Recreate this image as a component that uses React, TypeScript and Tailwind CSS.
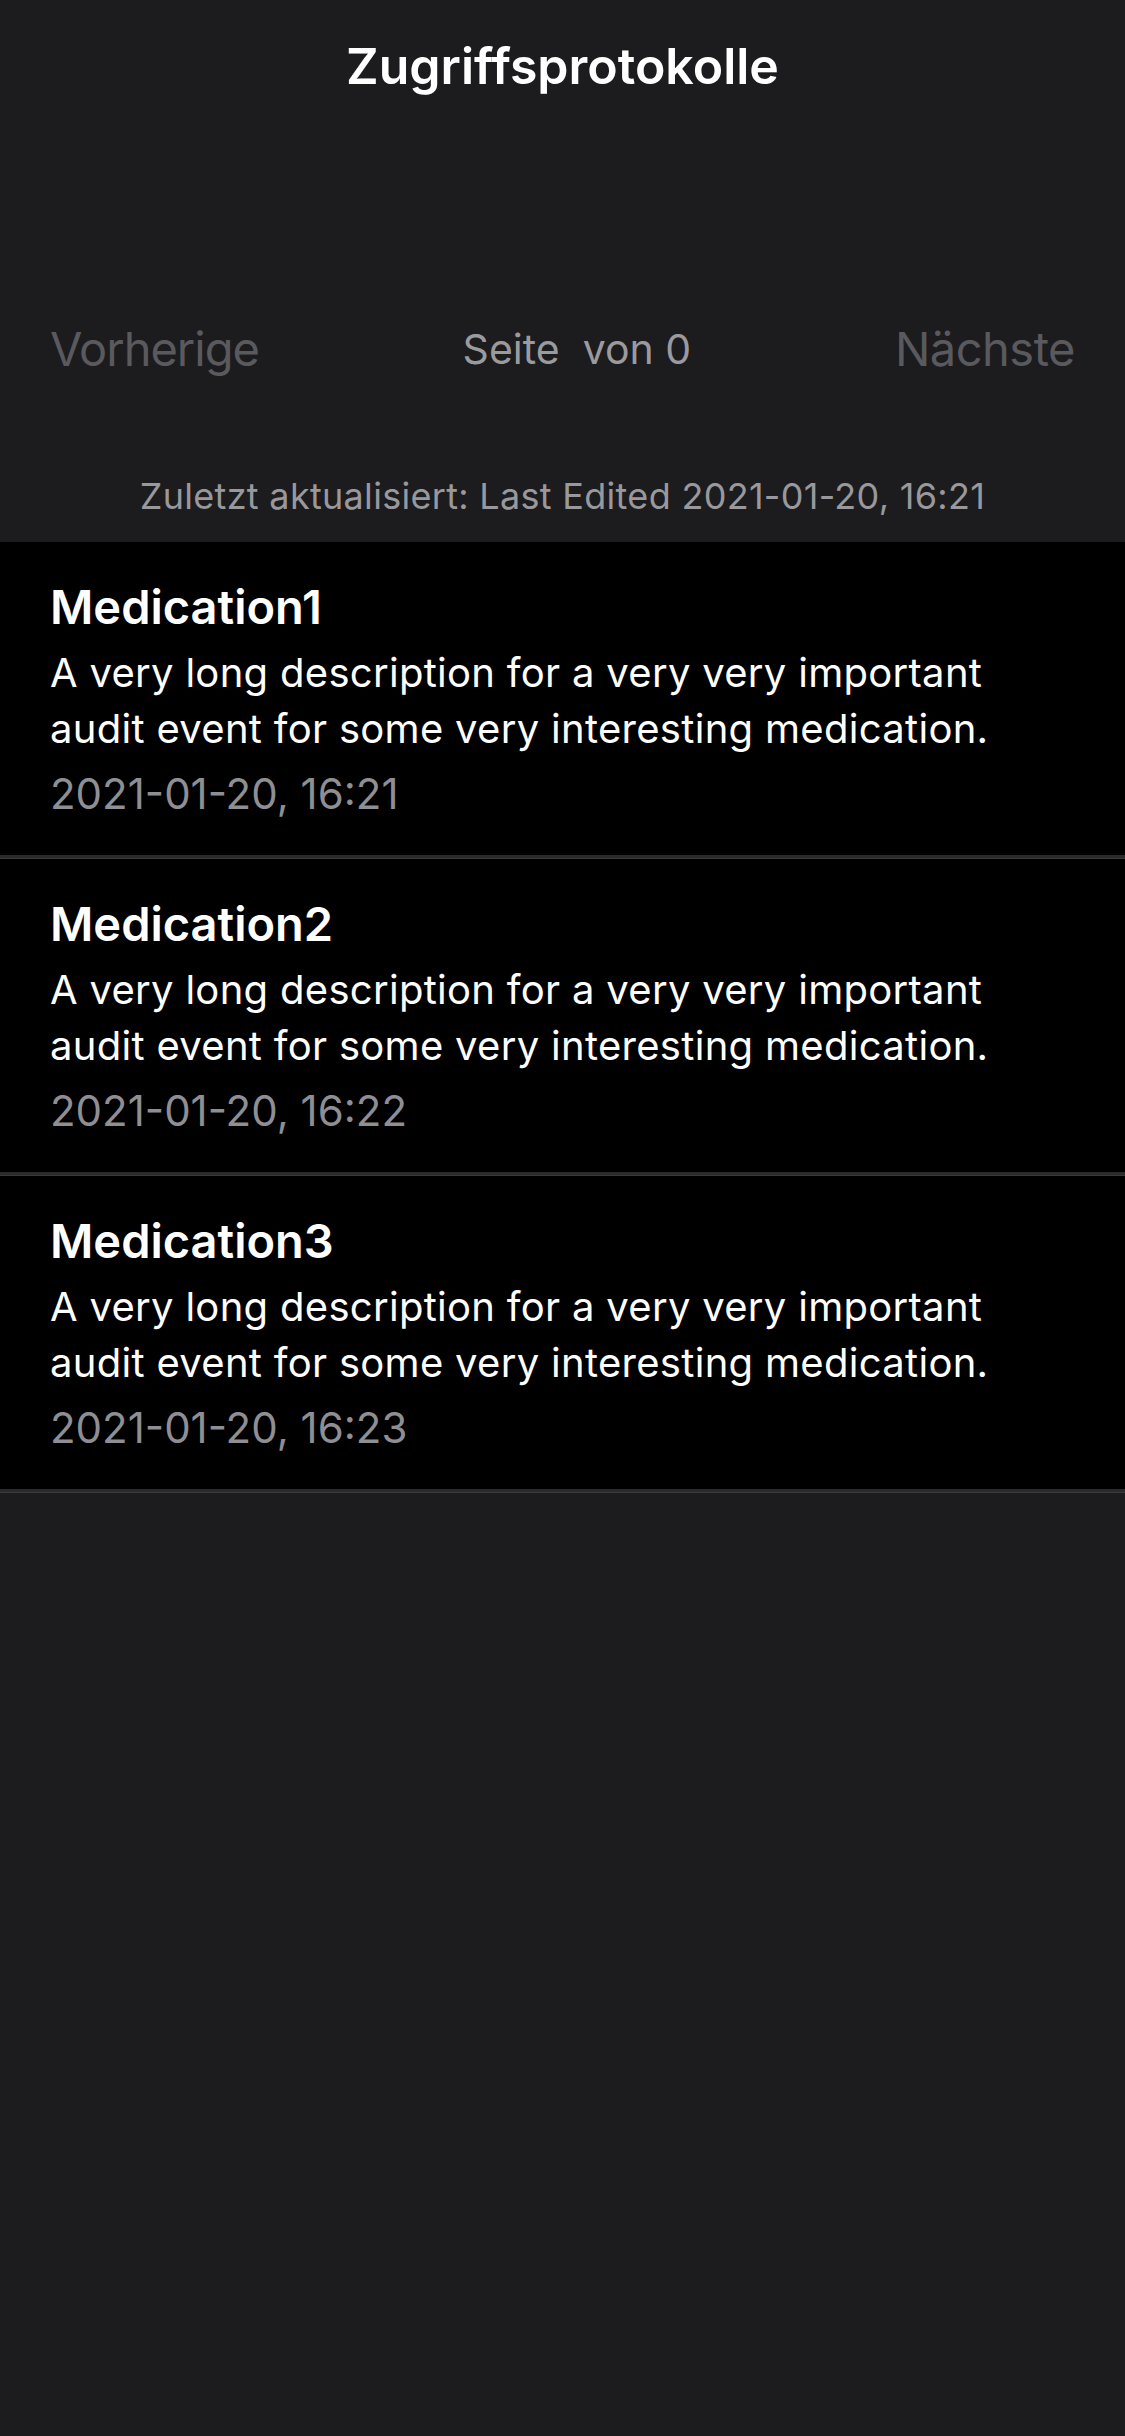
// Zugriffsprotokolle - audit log list, dark mode

interface AuditEntry {
  title: string;
  description: string;
  date: string;
}

const entries: AuditEntry[] = [
  {
    title: 'Medication1',
    description: 'A very long description for a very very important audit event for some very interesting medication.',
    date: '2021-01-20, 16:21',
  },
  {
    title: 'Medication2',
    description: 'A very long description for a very very important audit event for some very interesting medication.',
    date: '2021-01-20, 16:22',
  },
  {
    title: 'Medication3',
    description: 'A very long description for a very very important audit event for some very interesting medication.',
    date: '2021-01-20, 16:23',
  },
];

function AuditRow({ entry }: { entry: AuditEntry }) {
  return (
    <div>
      <div className="bg-black pl-[50px] pr-[70px] pt-[37px] pb-[33px]">
        <div className="text-[47px] leading-[56px] font-semibold text-white">{entry.title}</div>
        <div className="mt-[10px] text-[40px] leading-[56px] tracking-[0.3px] text-white">{entry.description}</div>
        <div className="mt-[9px] text-[42px] leading-[56px] text-[#8e8e93]">{entry.date}</div>
      </div>
      <div className="h-[3px] bg-[#2a2a2c]" />
      <div className="h-px bg-[#3a3a3c]" />
    </div>
  );
}

export default function App() {
  return (
    <div
      className="min-h-[2436px] w-[1125px] bg-[#1c1c1e]"
      style={{ fontFamily: 'Inter, "Noto Sans", "Liberation Sans", sans-serif' }}
    >
      {/* Titel */}
      <div className="pt-[36px] text-center text-[50px] leading-[60px] font-semibold text-white">
        Zugriffsprotokolle
      </div>

      {/* Seitennavigation */}
      <div className="mt-[225px] flex items-center justify-between px-[50px] h-[56px]">
        <button className="text-[47px] leading-[56px] tracking-[-1px] text-[#59595e]">Vorherige</button>
        <span className="text-[41px] leading-[56px] text-[#9a9a9f] whitespace-pre">Seite  von 0</span>
        <button className="text-[47px] leading-[56px] tracking-[-0.5px] text-[#59595e]">Nächste</button>
      </div>

      {/* Zuletzt aktualisiert */}
      <div className="mt-[97px] text-center text-[36px] leading-[44px] tracking-[0.3px] text-[#98989d]">
        Zuletzt aktualisiert: Last Edited 2021-01-20, 16:21
      </div>

      {/* Liste */}
      <div className="mt-[24px]">
        {entries.map((entry) => (
          <AuditRow key={entry.title} entry={entry} />
        ))}
      </div>
    </div>
  );
}
